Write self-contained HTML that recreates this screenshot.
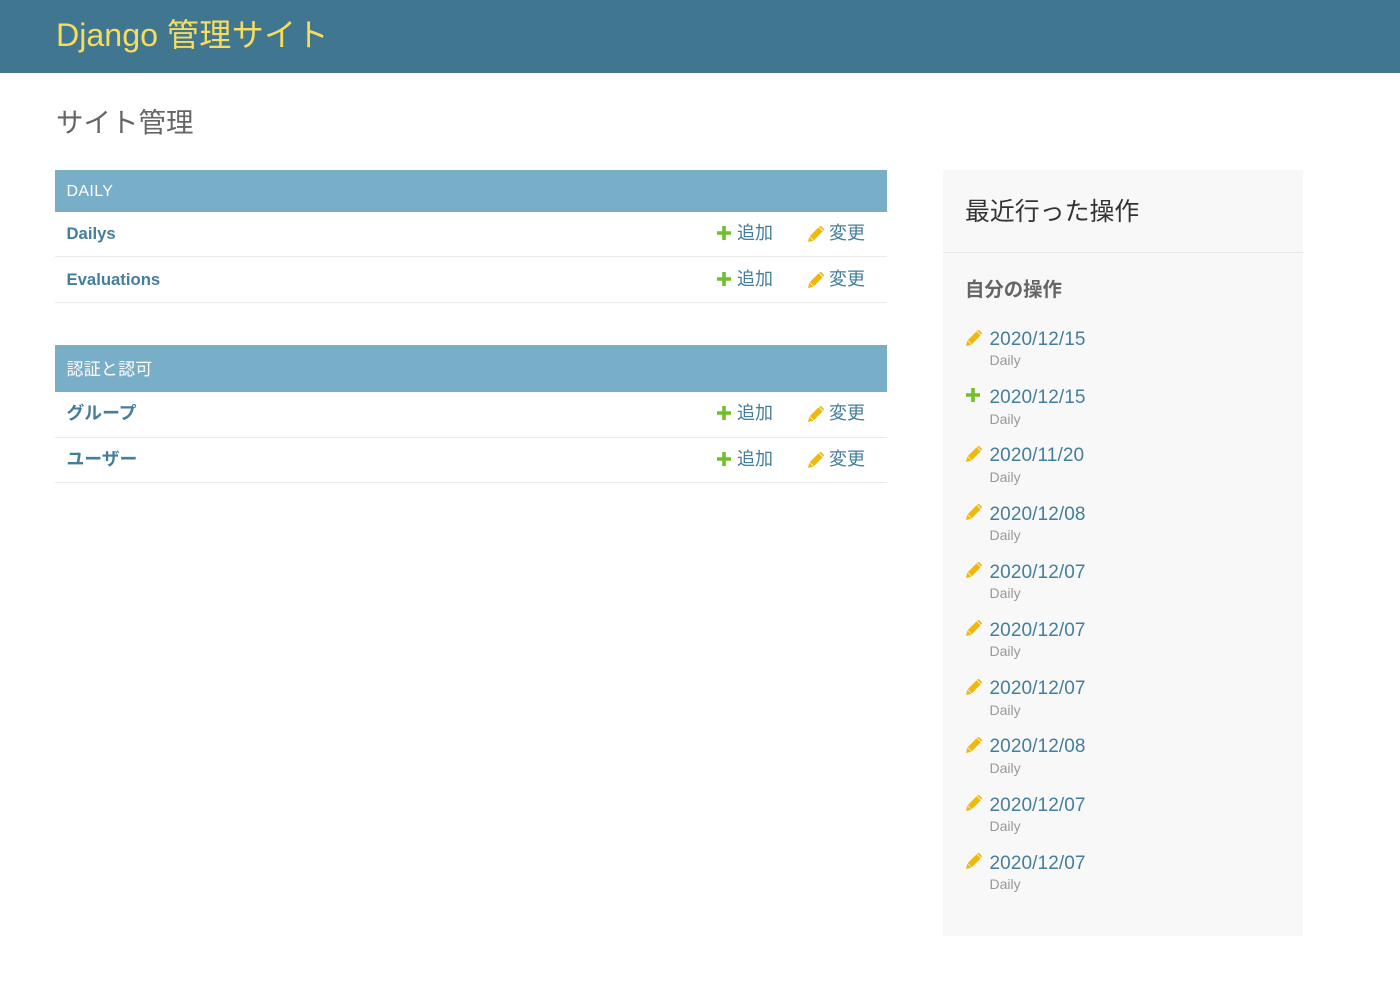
<!DOCTYPE html>
<html lang="ja"><head><meta charset="utf-8"><title>サイト管理</title>
<style>
html,body{margin:0;padding:0;background:#fff}
body{position:relative;width:1400px;height:999px;overflow:hidden;font-family:"Liberation Sans","Noto Sans CJK JP",sans-serif;color:#333}
.a{position:absolute;white-space:nowrap;line-height:1}
.bar{position:absolute;left:55px;width:832px;background:#79aec8}
.ln{position:absolute;left:55px;width:832px;height:1px;background:#eaeaea}
.m{color:#447e9b;font-weight:700;font-size:17.8px;left:66.5px}
.e{font-size:16.7px}
.l{color:#447e9b;font-size:18px}
.d{color:#447e9b;font-size:19px;left:989.5px;letter-spacing:.1px}
.s{color:#999;font-size:14px;left:989.5px}
svg{position:absolute;overflow:visible}
</style></head><body>
<svg width="0" height="0" style="position:absolute"><defs>
<g id="p"><path d="M0 16 L1.3 10.6 L5.4 14.7Z" fill="#efb80b"/><path d="M1.8 10.1 L10.6 1.3 L14.7 5.4 L5.9 14.2Z" fill="#efb80b"/><path d="M11.2.7 L11.7.3 a1.2 1.2 0 0 1 1.6 0 L15.7 2.7 a1.2 1.2 0 0 1 0 1.6 L15.3 4.8Z" fill="#efb80b"/></g>
<g id="c"><path d="M5.2 0h3.6v5.2H14v3.6H8.8V14H5.2V8.8H0V5.2h5.2Z" fill="#70bf2b"/></g>
</defs></svg>

<div style="position:absolute;left:0;top:0;width:1400px;height:73px;background:#417690"></div>
<div class="a" style="left:56px;top:19px;font-size:32px;color:#f5dd5d"><span style="font-size:32.2px">Django</span> <span style="letter-spacing:.4px">管理サイト</span></div>
<div class="a" style="left:56px;top:109px;font-size:27.5px;color:#666">サイト管理</div>

<div class="bar" style="top:170px;height:42px"></div>
<div class="a" style="left:66.5px;top:184px;font-size:16px;color:#fff;letter-spacing:.35px">DAILY</div>
<div class="a m e" style="top:226px">Dailys</div>
<div class="a m e" style="top:272px">Evaluations</div>
<div class="ln" style="top:256px"></div><div class="ln" style="top:302px"></div>

<div class="bar" style="top:345px;height:47px"></div>
<div class="a" style="left:66.5px;top:361px;font-size:17px;color:#fff;letter-spacing:.2px">認証と認可</div>
<div class="a m" style="top:405px">グループ</div>
<div class="a m" style="top:451px">ユーザー</div>
<div class="ln" style="top:437px"></div><div class="ln" style="top:482px"></div>

<svg style="left:717px;top:226px" width="14" height="14"><use href="#c"/></svg><div class="a l" style="left:737px;top:224px">追加</div>
<svg style="left:808px;top:226px" width="16" height="16"><use href="#p"/></svg><div class="a l" style="left:829px;top:224px">変更</div>
<svg style="left:717px;top:272px" width="14" height="14"><use href="#c"/></svg><div class="a l" style="left:737px;top:270px">追加</div>
<svg style="left:808px;top:272px" width="16" height="16"><use href="#p"/></svg><div class="a l" style="left:829px;top:270px">変更</div>
<svg style="left:717px;top:406px" width="14" height="14"><use href="#c"/></svg><div class="a l" style="left:737px;top:404px">追加</div>
<svg style="left:808px;top:406px" width="16" height="16"><use href="#p"/></svg><div class="a l" style="left:829px;top:404px">変更</div>
<svg style="left:717px;top:452px" width="14" height="14"><use href="#c"/></svg><div class="a l" style="left:737px;top:450px">追加</div>
<svg style="left:808px;top:452px" width="16" height="16"><use href="#p"/></svg><div class="a l" style="left:829px;top:450px">変更</div>

<div style="position:absolute;left:943px;top:170px;width:360px;height:766px;background:#f8f8f8"></div>
<div style="position:absolute;left:943px;top:252px;width:360px;height:1px;background:#e8e8e8"></div>
<div class="a" style="left:965px;top:200px;font-size:24.9px;color:#333">最近行った操作</div>
<div class="a" style="left:965px;top:281px;font-size:19.4px;font-weight:700;color:#666">自分の操作</div>

<svg style="left:966px;top:330px" width="16" height="16"><use href="#p"/></svg><div class="a d" style="top:330px">2020/12/15</div><div class="a s" style="top:353px">Daily</div>
<svg style="left:966px;top:388px" width="14" height="14"><use href="#c"/></svg><div class="a d" style="top:388px">2020/12/15</div><div class="a s" style="top:412px">Daily</div>
<svg style="left:966px;top:446px" width="16" height="16"><use href="#p"/></svg><div class="a d" style="top:446px">2020/11/20</div><div class="a s" style="top:470px">Daily</div>
<svg style="left:966px;top:504px" width="16" height="16"><use href="#p"/></svg><div class="a d" style="top:505px">2020/12/08</div><div class="a s" style="top:528px">Daily</div>
<svg style="left:966px;top:562px" width="16" height="16"><use href="#p"/></svg><div class="a d" style="top:563px">2020/12/07</div><div class="a s" style="top:586px">Daily</div>
<svg style="left:966px;top:620px" width="16" height="16"><use href="#p"/></svg><div class="a d" style="top:621px">2020/12/07</div><div class="a s" style="top:644px">Daily</div>
<svg style="left:966px;top:679px" width="16" height="16"><use href="#p"/></svg><div class="a d" style="top:679px">2020/12/07</div><div class="a s" style="top:703px">Daily</div>
<svg style="left:966px;top:737px" width="16" height="16"><use href="#p"/></svg><div class="a d" style="top:737px">2020/12/08</div><div class="a s" style="top:761px">Daily</div>
<svg style="left:966px;top:795px" width="16" height="16"><use href="#p"/></svg><div class="a d" style="top:796px">2020/12/07</div><div class="a s" style="top:819px">Daily</div>
<svg style="left:966px;top:853px" width="16" height="16"><use href="#p"/></svg><div class="a d" style="top:854px">2020/12/07</div><div class="a s" style="top:877px">Daily</div>
</body></html>
